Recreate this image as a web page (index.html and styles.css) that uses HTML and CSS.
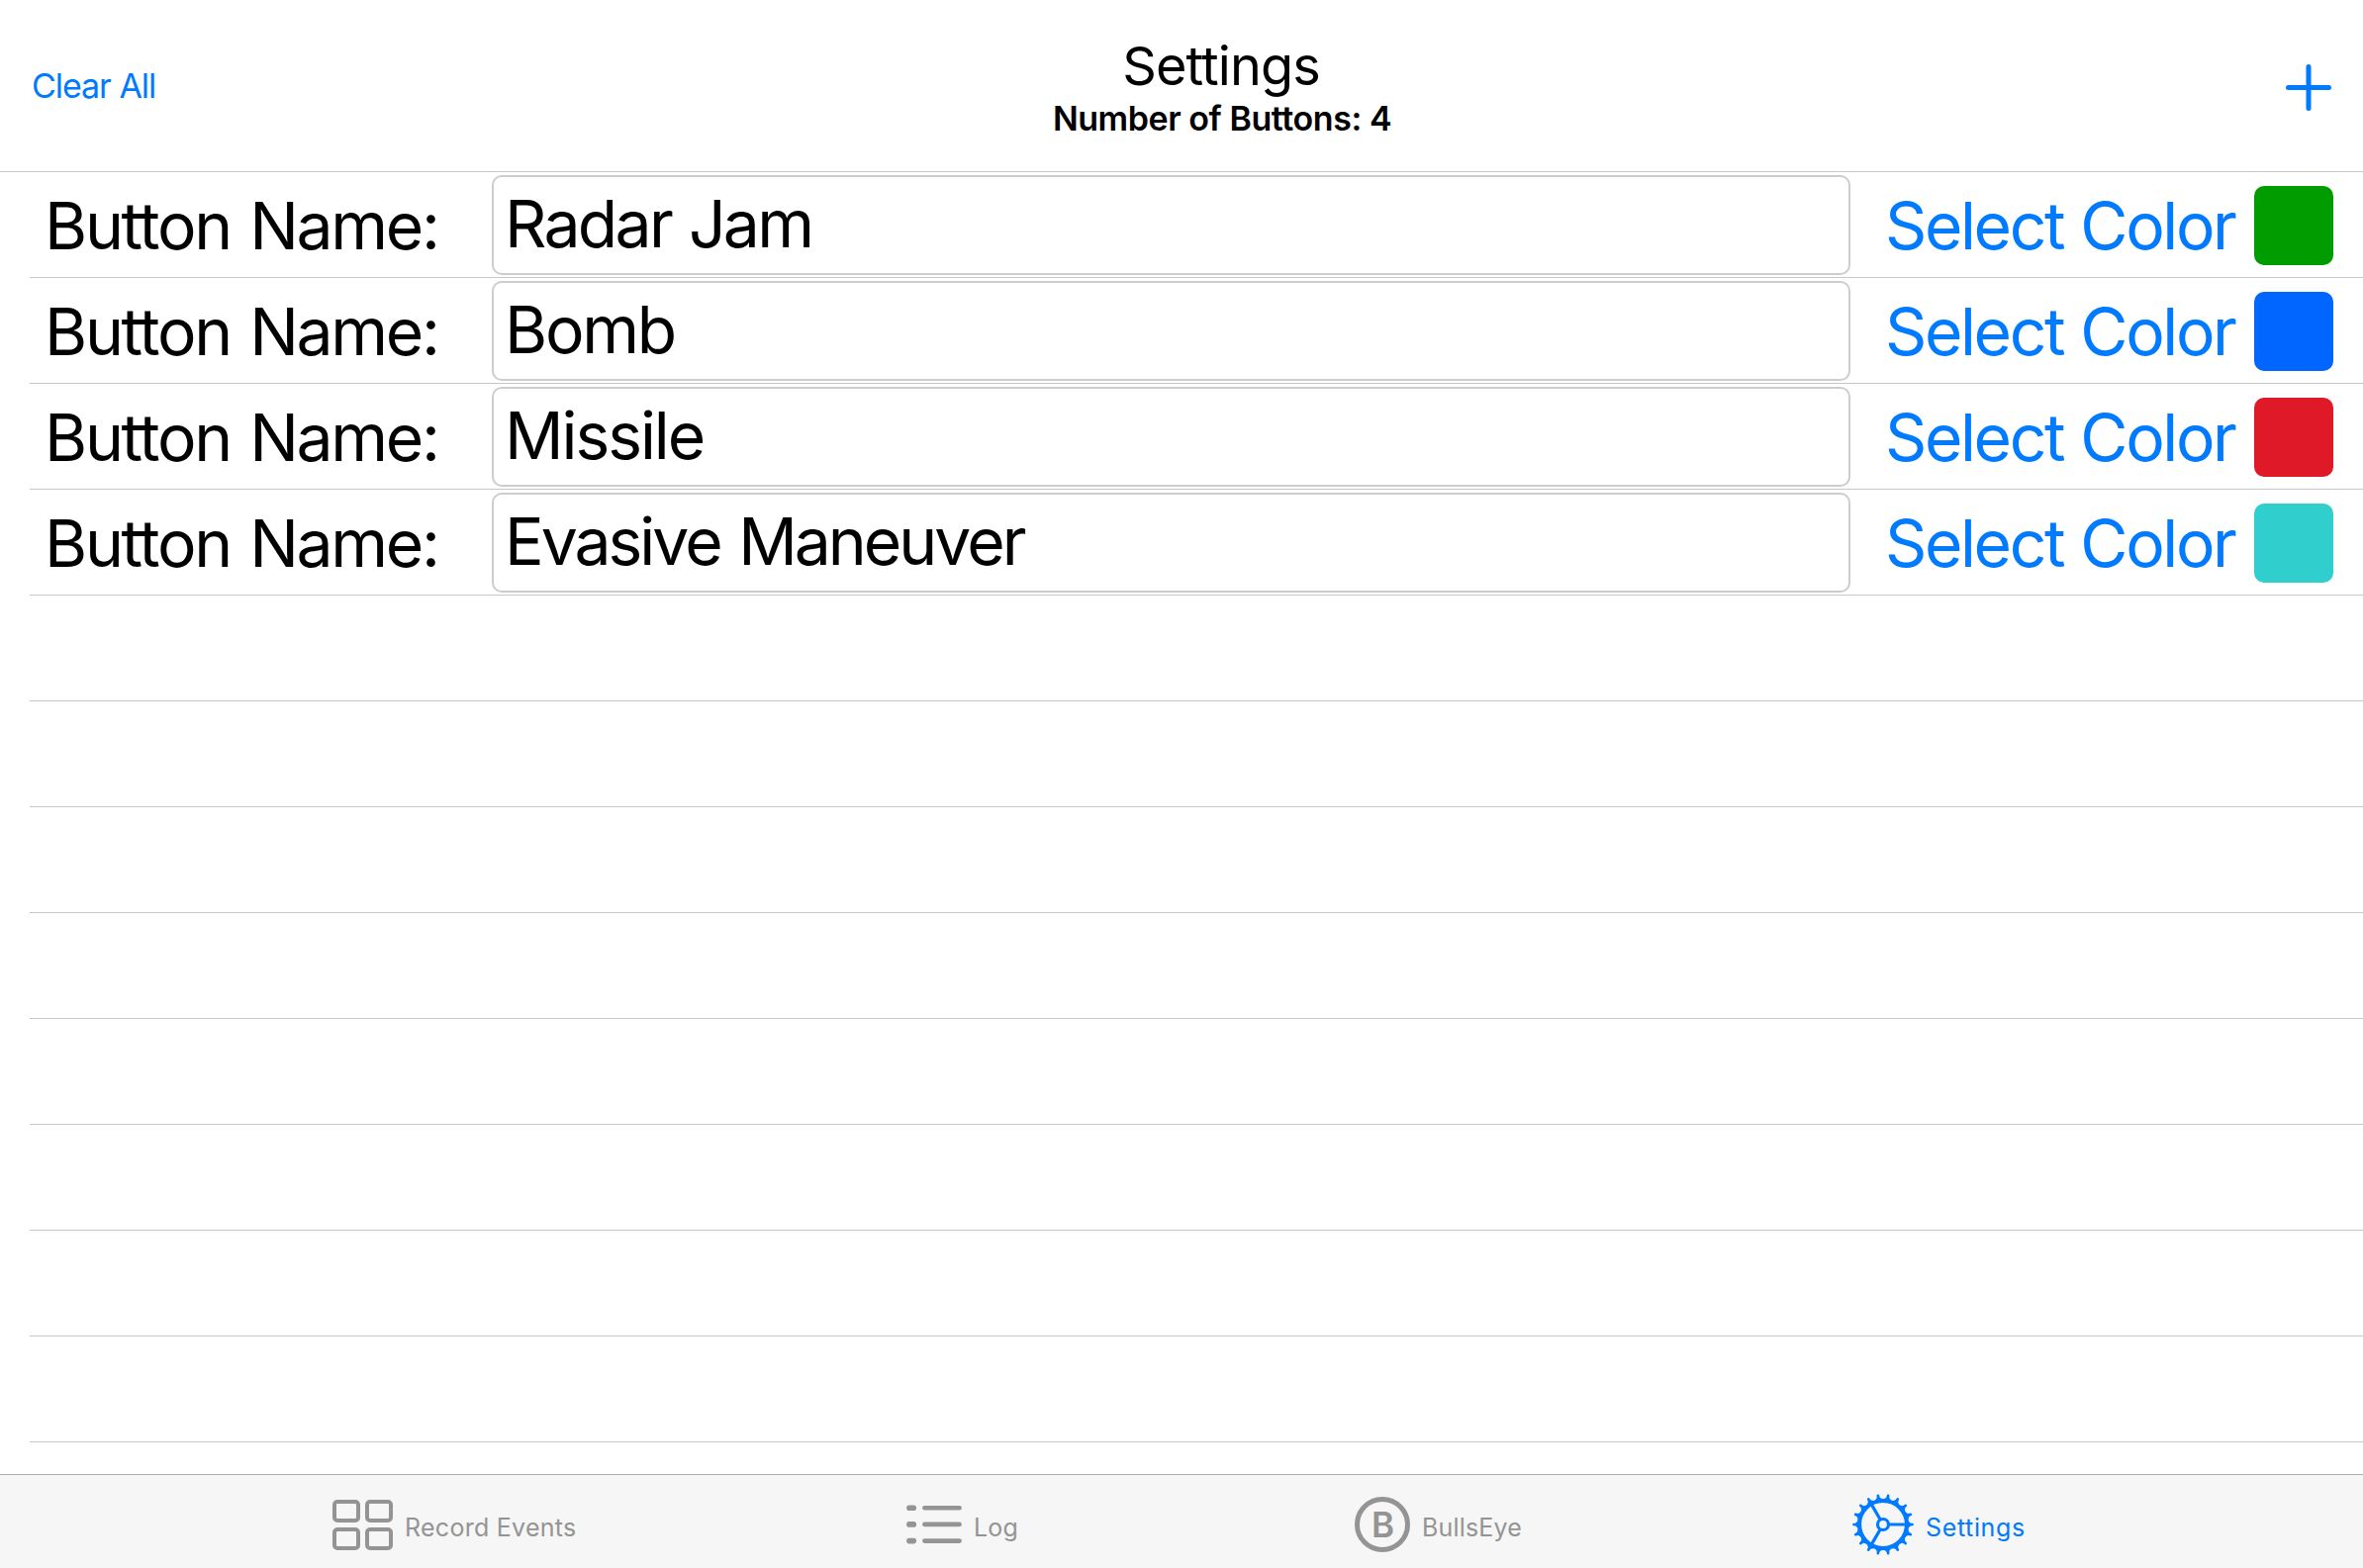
FILE: index.html
```html
<!DOCTYPE html>
<html lang="en">
<head>
<meta charset="utf-8">
<title>Settings</title>
<link rel="stylesheet" href="styles.css">
</head>
<body>
<div class="app">
  <header class="navbar">
    <a class="clear">Clear All</a>
    <div class="heading">
      <h1 class="title">Settings</h1>
      <p class="subtitle">Number of Buttons: 4</p>
    </div>
    <svg class="add" width="46" height="47" viewBox="0 0 46 47" fill="none" stroke="currentColor" stroke-width="5" stroke-linecap="round"><path d="M23 2.5V44.5M2.5 23.5H43.5"/></svg>
  </header>

  <main class="list">
    <div class="row">
      <span class="label">Button Name:</span>
      <div class="field">Radar Jam</div>
      <a class="select">Select Color</a>
      <span class="swatch green"></span>
    </div>
    <div class="row">
      <span class="label">Button Name:</span>
      <div class="field medium">Bomb</div>
      <a class="select">Select Color</a>
      <span class="swatch blue"></span>
    </div>
    <div class="row">
      <span class="label">Button Name:</span>
      <div class="field loose">Missile</div>
      <a class="select">Select Color</a>
      <span class="swatch red"></span>
    </div>
    <div class="row">
      <span class="label">Button Name:</span>
      <div class="field tight">Evasive Maneuver</div>
      <a class="select">Select Color</a>
      <span class="swatch teal"></span>
    </div>
    <div class="row"></div>
    <div class="row"></div>
    <div class="row"></div>
    <div class="row"></div>
    <div class="row"></div>
    <div class="row"></div>
    <div class="row"></div>
    <div class="row"></div>
  </main>

  <nav class="tabbar">
    <a class="tab">
      <svg width="61" height="51" viewBox="0 0 61 51" fill="none" stroke="currentColor" stroke-width="4">
        <rect x="2" y="2" width="24" height="19" rx="3"/><rect x="35" y="2" width="24" height="19" rx="3"/>
        <rect x="2" y="30" width="24" height="19" rx="3"/><rect x="35" y="30" width="24" height="19" rx="3"/>
      </svg>
      <span class="name record">Record Events</span>
    </a>
    <a class="tab">
      <svg width="56" height="40" viewBox="0 0 56 40" fill="none" stroke="currentColor" stroke-linecap="round">
        <path stroke-width="5.6" d="M2.9 3.2H7.3M2.9 19.9H7.3M2.9 36.6H7.3"/>
        <path stroke-width="4.6" d="M18.4 3.2H53.6M18.4 19.9H53.6M18.4 36.6H53.6"/>
      </svg>
      <span class="name">Log</span>
    </a>
    <a class="tab">
      <span class="badge">B</span>
      <span class="name">BullsEye</span>
    </a>
    <a class="tab active">
      <svg width="62" height="62" viewBox="-31 -31 62 62" fill="none" stroke="currentColor">
        <defs><path id="tooth" d="M24 -4.2Q26.4 -3.6 27.2 -1.8Q28 -1.3 29.8 -1.3Q31 -1.1 31 0Q31 1.1 29.8 1.3Q28 1.3 27.2 1.8Q26.4 3.6 24 4.2Z" fill="currentColor" stroke="none"/></defs>
        <circle r="24" stroke-width="4.2"/>
        <circle r="5.5" stroke-width="3.2"/>
        <path stroke-width="3.2" d="M6 0H23M-3 -5.2L-11.5 -19.9M-3 5.2L-11.5 19.9"/>
        <use href="#tooth"/><use href="#tooth" transform="rotate(20)"/><use href="#tooth" transform="rotate(40)"/>
        <use href="#tooth" transform="rotate(60)"/><use href="#tooth" transform="rotate(80)"/><use href="#tooth" transform="rotate(100)"/>
        <use href="#tooth" transform="rotate(120)"/><use href="#tooth" transform="rotate(140)"/><use href="#tooth" transform="rotate(160)"/>
        <use href="#tooth" transform="rotate(180)"/><use href="#tooth" transform="rotate(200)"/><use href="#tooth" transform="rotate(220)"/>
        <use href="#tooth" transform="rotate(240)"/><use href="#tooth" transform="rotate(260)"/><use href="#tooth" transform="rotate(280)"/>
        <use href="#tooth" transform="rotate(300)"/><use href="#tooth" transform="rotate(320)"/><use href="#tooth" transform="rotate(340)"/>
      </svg>
      <span class="name wide">Settings</span>
    </a>
  </nav>
</div>
</body>
</html>
```

FILE: styles.css
```css
* { box-sizing: border-box; }

body {
  margin: 0;
  background: #fff;
  color: #000;
  font-family: Inter, "Liberation Sans", sans-serif;
}

.app {
  display: flex;
  flex-direction: column;
  height: 1585px;
  overflow: hidden;
}

.navbar {
  display: grid;
  grid-template-columns: 160px 1fr 78px;
  flex: none;
  height: 174px;
  border-bottom: 1px solid #c7c7c9;
}

.clear {
  padding: 67px 0 0 32px;
  color: #007aff;
  font-size: 34px;
  line-height: 40px;
  letter-spacing: -1.05px;
  white-space: nowrap;
}

.heading {
  padding-top: 34px;
  text-align: center;
}

.title {
  margin: 0;
  padding-right: 2px;
  font-size: 54px;
  font-weight: 400;
  line-height: 65px;
  letter-spacing: -0.89px;
}

.subtitle {
  margin: 0;
  font-size: 34px;
  font-weight: 600;
  line-height: 42px;
  letter-spacing: -0.45px;
}

.add {
  margin-top: 65px;
  color: #007aff;
}

.list {
  flex: 1;
  min-height: 0;
  overflow: hidden;
  padding-left: 30px;
}

.row {
  display: flex;
  align-items: flex-start;
  height: 107px;
  padding-left: 15px;
  border-bottom: 1px solid #c7c7c9;
  font-size: 66px;
  white-space: nowrap;
}

.label {
  width: 452px;
  padding-top: 1px;
  line-height: 106px;
  letter-spacing: -2.3px;
  word-spacing: 3px;
}

.field {
  width: 1373px;
  height: 101px;
  margin-top: 3px;
  padding-left: 11px;
  border: 2px solid #cdcdcd;
  border-radius: 10px;
  line-height: 94px;
  letter-spacing: -2.7px;
  word-spacing: 2px;
}

.field.medium { letter-spacing: -2.3px; }
.field.loose { letter-spacing: -2.1px; }
.field.tight { letter-spacing: -3px; word-spacing: 3px; }

.select {
  width: 408px;
  padding: 1px 0 0 35px;
  color: #007aff;
  line-height: 106px;
  letter-spacing: -2.4px;
  word-spacing: 1px;
}

.swatch {
  width: 80px;
  height: 80px;
  margin-top: 14px;
  border-radius: 10px;
}

.green { background: #009c00; }
.blue { background: #0066ff; }
.red { background: #df1928; }
.teal { background: #30cfcd; }

.tabbar {
  display: grid;
  grid-template-columns: 580px 453px 503px 1fr;
  flex: none;
  height: 95px;
  padding: 6px 0 0 336px;
  border-top: 1px solid #acacae;
  background: #f6f6f6;
}

.tab {
  display: flex;
  align-items: center;
  gap: 12px;
  color: #949494;
}

.tab.active { color: #007aff; }

.name {
  padding-top: 6px;
  font-size: 25px;
  line-height: 30px;
  letter-spacing: 0.16px;
}

.name.record { letter-spacing: 0.27px; }
.name.wide { letter-spacing: 0.64px; }

.badge {
  width: 56px;
  height: 56px;
  padding-left: 1px;
  border: 5px solid currentColor;
  border-radius: 50%;
  font-size: 35px;
  font-weight: 600;
  line-height: 46px;
  text-align: center;
}
```
